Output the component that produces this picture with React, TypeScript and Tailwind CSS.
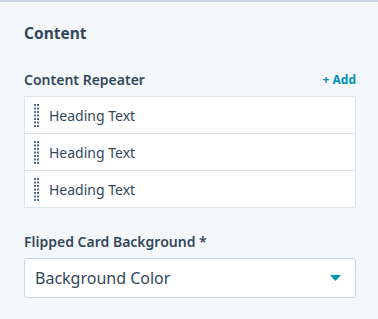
import React from "react";

function Grip() {
  const dots = [];
  for (let r = 0; r < 7; r++) {
    for (let c = 0; c < 2; c++) {
      dots.push(<rect key={`${r}-${c}`} x={c * 3} y={r * 3.5} width={2} height={2} fill="#516f90" />);
    }
  }
  return (
    <svg width="5" height="23" viewBox="0 0 5 23" className="shrink-0">
      {dots}
    </svg>
  );
}

export default function App() {
  const font = { fontFamily: '"Noto Sans", "Liberation Sans", sans-serif' };
  return (
    <div className="w-[378px] h-[319px] bg-[#f5f8fa] border-t-2 border-[#cbd6e2] text-[#33475b]" style={font}>
      <div className="pl-6 pr-[22px] pt-[20px]">
        <h2 className="text-[15.5px] font-bold leading-[22px]">Content</h2>
        <div className="mt-[26px] flex items-center justify-between">
          <span className="text-[14px] font-semibold leading-[20px]">Content Repeater</span>
          <span className="text-[12px] font-bold text-[#0091ae] leading-[20px]">+ Add</span>
        </div>
        <div className="mt-[6px] border border-[#dfe3eb] bg-white">
          {[0, 1, 2].map((i) => (
            <div
              key={i}
              className={`flex items-center pl-[9px] gap-[10px] ${i > 0 ? "h-[37px] border-t border-[#dfe3eb]" : "h-[36px]"}`}
            >
              <Grip />
              <span className="text-[14px] text-[#33475b]">Heading Text</span>
            </div>
          ))}
        </div>
        <div className="mt-[24px] text-[14px] font-semibold leading-[20px]">Flipped Card Background *</div>
        <div className="mt-[6px] h-[40px] border border-[#cbd6e2] rounded-[3px] bg-white flex items-center justify-between pl-[10px] pr-[14px]">
          <span className="text-[16px]">Background Color</span>
          <svg width="11" height="6" viewBox="0 0 11 6">
            <path d="M0 0 L11 0 L5.5 6 Z" fill="#0091ae" />
          </svg>
        </div>
      </div>
    </div>
  );
}
